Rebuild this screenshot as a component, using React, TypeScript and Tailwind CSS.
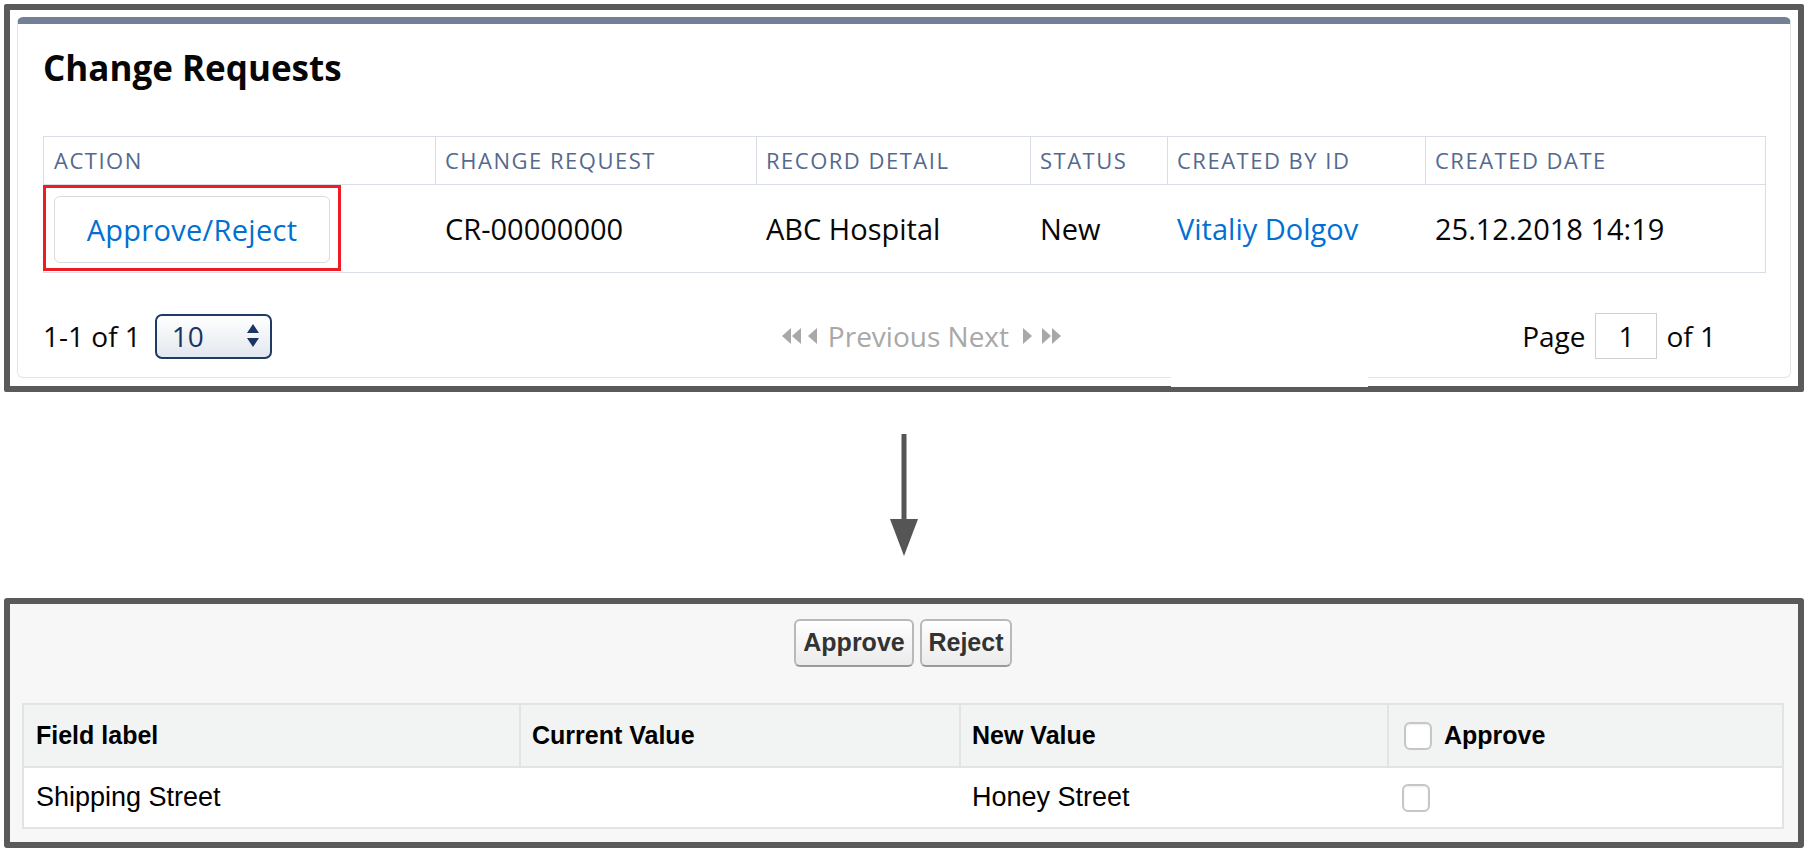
import React from "react";

const sfFont = "[font-family:'Open_Sans',sans-serif]";
const arialFont = "[font-family:'Liberation_Sans',Arial,sans-serif]";

const DoubleLeft = () => (
  <svg width="20" height="18" viewBox="0 0 20 18" className="block">
    <polygon points="9,1 9,17 0,9" fill="#a8a8a8" />
    <polygon points="19,1 19,17 10,9" fill="#a8a8a8" />
  </svg>
);

const DoubleRight = () => (
  <svg width="20" height="18" viewBox="0 0 20 18" className="block">
    <polygon points="1,1 1,17 10,9" fill="#a8a8a8" />
    <polygon points="11,1 11,17 20,9" fill="#a8a8a8" />
  </svg>
);

const SingleLeft = () => (
  <svg width="9" height="18" viewBox="0 0 9 18" className="block">
    <polygon points="9,1 9,17 0,9" fill="#a8a8a8" />
  </svg>
);

const SingleRight = () => (
  <svg width="9" height="18" viewBox="0 0 9 18" className="block">
    <polygon points="0,1 0,17 9,9" fill="#a8a8a8" />
  </svg>
);

const SelectArrows = () => (
  <svg width="12" height="24" viewBox="0 0 12 24" className="block">
    <polygon points="6,0 12,9 0,9" fill="#1b3561" />
    <polygon points="0,14 12,14 6,23" fill="#1b3561" />
  </svg>
);

const Checkbox = () => (
  <div className="w-[28px] h-[28px] rounded-[6px] border-2 border-[#c6c6c6] bg-white shadow-[inset_0_1px_2px_rgba(0,0,0,0.08)]" />
);

const headers = [
  "Action",
  "Change Request",
  "Record Detail",
  "Status",
  "Created By ID",
  "Created Date",
];

const ChangeRequestsCard = () => (
  <div className="mx-[4px] mt-[4px] h-[388px] border-[6px] border-[#5a5a5a] rounded-[2px] bg-white px-[7px] pt-[7px] pb-[8px]">
    <div
      className={`h-full rounded-[6px] border border-[#e4e4e4] border-t-[7px] border-t-[#747f95] bg-white pl-[25px] pr-[24px] pt-[22px] text-[#080707] ${sfFont}`}>
      <h1 className="text-[35px] leading-[44px] font-bold">Change Requests</h1>

      <div className="mt-[46px] border border-[#d8dde6]">
        <div className="grid grid-cols-[391px_321px_274px_137px_258px_339px] h-[48px] border-b border-[#d8dde6]">
          {headers.map((h, i) => (
            <div
              key={h}
              className={`flex items-center uppercase text-[22px] tracking-[1.5px] text-[#54698d] ${
                i === 0 ? "pl-[10px]" : "pl-[9px] border-l border-[#d8dde6]"
              }`}>
              {h}
            </div>
          ))}
        </div>
        <div className="grid grid-cols-[391px_321px_274px_137px_258px_339px] h-[87px] text-[29px]">
          <div className="flex items-start">
            <div className="-ml-[1px] w-[298px] h-[86px] border-[3px] border-[#ee1c25] px-[8px] pt-[8px] pb-[5px]">
              <button className="w-full h-full rounded-[6px] border border-[#d8dbdf] bg-white text-[#0070d2] text-[29px] tracking-[0.3px] leading-none">
                Approve/Reject
              </button>
            </div>
          </div>
          <div className="flex items-center pl-[10px]">CR-00000000</div>
          <div className="flex items-center pl-[10px]">ABC Hospital</div>
          <div className="flex items-center pl-[10px]">New</div>
          <div className="flex items-center pl-[10px] text-[#0070d2]">
            Vitaliy Dolgov
          </div>
          <div className="flex items-center pl-[10px]">25.12.2018 14:19</div>
        </div>
      </div>

      <div className="mt-[39px] h-[48px] flex items-center text-[28px]">
        <span>1-1 of 1</span>
        <div className="ml-[14px] w-[117px] h-[45px] rounded-[7px] border-2 border-[#1f3a63] bg-gradient-to-b from-white to-[#e3e7ee] flex items-center justify-between pl-[15px] pr-[11px] text-[#1b3561]">
          <span>10</span>
          <SelectArrows />
        </div>

        <div className="ml-[510px] flex items-center text-[#a8a8a8]">
          <DoubleLeft />
          <div className="ml-[6px]">
            <SingleLeft />
          </div>
          <span className="ml-[11px] text-[28px]">Previous Next</span>
          <div className="ml-[14px]">
            <SingleRight />
          </div>
          <div className="ml-[9px]">
            <DoubleRight />
          </div>
        </div>

        <div className="ml-auto mr-[50px] flex items-center">
          <span>Page</span>
          <div className="ml-[10px] w-[62px] h-[46px] border border-[#cfcfcf] bg-white flex items-center justify-center">
            1
          </div>
          <span className="ml-[9px]">of 1</span>
        </div>
      </div>
    </div>
  </div>
);

const ApprovalPanel = () => (
  <div
    className={`mx-[4px] mt-[42px] h-[250px] border-[6px] border-[#5a5a5a] rounded-[3px] bg-[#f7f7f7] pt-[15px] pl-[12px] pr-[14px] text-black ${arialFont}`}>
    <div className="flex justify-center gap-[6px]">
      <button className="w-[120px] h-[48px] rounded-[6px] border-2 border-[#b9b9b9] border-b-[#9a9a9a] bg-gradient-to-b from-white to-[#ebebeb] text-[25px] font-bold text-[#333]">
        Approve
      </button>
      <button className="w-[92px] h-[48px] rounded-[6px] border-2 border-[#b9b9b9] border-b-[#9a9a9a] bg-gradient-to-b from-white to-[#ebebeb] text-[25px] font-bold text-[#333]">
        Reject
      </button>
    </div>

    <div className="mt-[36px] border-2 border-[#e2e4e4]">
      <div className="grid grid-cols-[495px_440px_428px_395px] h-[63px] border-b-2 border-[#e2e4e4] bg-[#f2f3f3] text-[25px] font-bold">
        <div className="flex items-center pl-[12px]">Field label</div>
        <div className="flex items-center pl-[11px] border-l-2 border-[#e2e4e4]">
          Current Value
        </div>
        <div className="flex items-center pl-[11px] border-l-2 border-[#e2e4e4]">
          New Value
        </div>
        <div className="flex items-center gap-[12px] pl-[15px] border-l-2 border-[#e2e4e4]">
          <Checkbox />
          <span>Approve</span>
        </div>
      </div>
      <div className="grid grid-cols-[495px_440px_428px_395px] h-[59px] bg-white text-[27px]">
        <div className="flex items-center pl-[12px]">Shipping Street</div>
        <div />
        <div className="flex items-center pl-[13px]">Honey Street</div>
        <div className="flex items-center pl-[15px]">
          <Checkbox />
        </div>
      </div>
    </div>
  </div>
);

export default function App() {
  return (
    <div className="relative w-[1808px] h-[852px] bg-white overflow-hidden">
      <ChangeRequestsCard />

      {/* white patch over the frame edge, as in the source shot */}
      <div className="absolute left-[1171px] top-[369px] w-[197px] h-[18px] bg-white" />

      <svg
        width="30"
        height="122"
        viewBox="0 0 30 122"
        className="block mx-auto mt-[42px]">
        <rect x="12.5" y="0" width="5" height="87" fill="#555555" />
        <polygon points="1,85 29,85 15,122" fill="#555555" />
      </svg>

      <ApprovalPanel />
    </div>
  );
}
